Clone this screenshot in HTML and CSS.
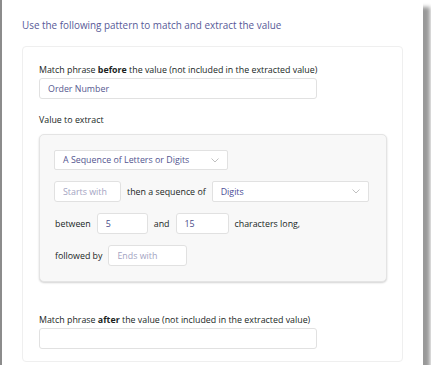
FILE: index.html
```html
<!DOCTYPE html>
<html lang="en">
<head>
    <meta charset="UTF-8">
    <meta name="viewport" content="width=device-width, initial-scale=1.0">
    <title>Extract Value Pattern</title>
    <link rel="stylesheet" href="styles.css">
</head>
<body>
    <div class="window">
        <p class="intro">Use the following pattern to match and extract the value</p>

        <div class="card">
            <label class="field-label">Match phrase <b>before</b> the value (not included in the extracted value)</label>
            <input class="text-input phrase" type="text" value="Order Number">

            <div class="section-label">Value to extract</div>
            <div class="pattern-box">
                <div class="dropdown kind">
                    <span>A Sequence of Letters or Digits</span>
                    <svg class="chevron" width="8" height="5" viewBox="0 0 8 5"><polyline points="0.5,0.5 4,4 7.5,0.5"/></svg>
                </div>

                <div class="row">
                    <input class="text-input starts" type="text" placeholder="Starts with">
                    <span>then a sequence of</span>
                    <div class="dropdown chars">
                        <span>Digits</span>
                        <svg class="chevron" width="8" height="5" viewBox="0 0 8 5"><polyline points="0.5,0.5 4,4 7.5,0.5"/></svg>
                    </div>
                </div>

                <div class="row">
                    <span>between</span>
                    <input class="text-input min" type="text" value="5">
                    <span>and</span>
                    <input class="text-input max" type="text" value="15">
                    <span>characters long,</span>
                </div>

                <div class="row">
                    <span>followed by</span>
                    <input class="text-input ends" type="text" placeholder="Ends with">
                </div>
            </div>

            <label class="field-label after">Match phrase <b>after</b> the value (not included in the extracted value)</label>
            <input class="text-input phrase" type="text" value="">
        </div>
    </div>
</body>
</html>
```

FILE: styles.css
```css
* {
    margin: 0;
    padding: 0;
    box-sizing: border-box;
}

body {
    font-family: 'Open Sans', 'Noto Sans', sans-serif;
    background: #fff;
    color: #201f1e;
}

.window {
    width: 423px;
    height: 365px;
    background: #fff;
    border-left: 2px solid #8c8c8c;
    padding: 18px 18px 0 20px;
    box-shadow: 7px 7px 4px rgba(0, 0, 0, 0.4);
}

.intro {
    font-size: 9.9px;
    line-height: 14px;
    color: #585a98;
}

.card {
    margin-top: 14px;
    width: 381px;
    border: 1px solid #efefef;
    border-radius: 4px;
    padding: 17px 15px 12px 16px;
}

.field-label,
.section-label {
    display: block;
    font-size: 8.85px;
    line-height: 13px;
}

.field-label b {
    font-weight: 700;
}

.section-label {
    margin-top: 15px;
}

.field-label.after {
    margin-top: 32px;
}

.text-input {
    display: block;
    height: 21px;
    border: 1px solid #e1e1e1;
    border-radius: 3px;
    background: #fff;
    font-family: inherit;
    font-size: 8.85px;
    color: #56588f;
    padding: 0 8px;
    outline: none;
}

.text-input::placeholder {
    color: #a3a3c2;
}

.phrase {
    width: 278px;
    margin-top: 1px;
}

.pattern-box {
    margin-top: 7px;
    width: 348px;
    background: #f8f8f8;
    border: 1px solid #e4e4e4;
    border-radius: 5px;
    box-shadow: 0 1px 2px rgba(0, 0, 0, 0.18);
    padding: 15px 14px 15px 14px;
    display: flex;
    flex-direction: column;
    gap: 11px;
}

.dropdown {
    display: flex;
    align-items: center;
    justify-content: space-between;
    height: 21px;
    background: #fff;
    border: 1px solid #e1e1e1;
    border-radius: 2px;
    font-size: 8.85px;
    color: #53558f;
    padding: 0 8px 0 8px;
}

.dropdown.kind {
    width: 174px;
    height: 20px;
}

.dropdown.chars {
    width: 157px;
    color: #4a4c96;
}

.chevron polyline {
    fill: none;
    stroke: #b0b0b0;
    stroke-width: 0.8;
}

.row {
    display: flex;
    align-items: center;
    gap: 6px;
    font-size: 8.85px;
    padding-left: 1px;
}

.row .text-input {
    color: #484a88;
}

.starts {
    width: 67px;
    margin-left: -1px;
}

.min {
    width: 51px;
}

.max {
    width: 53px;
}

.ends {
    width: 79px;
}
```
